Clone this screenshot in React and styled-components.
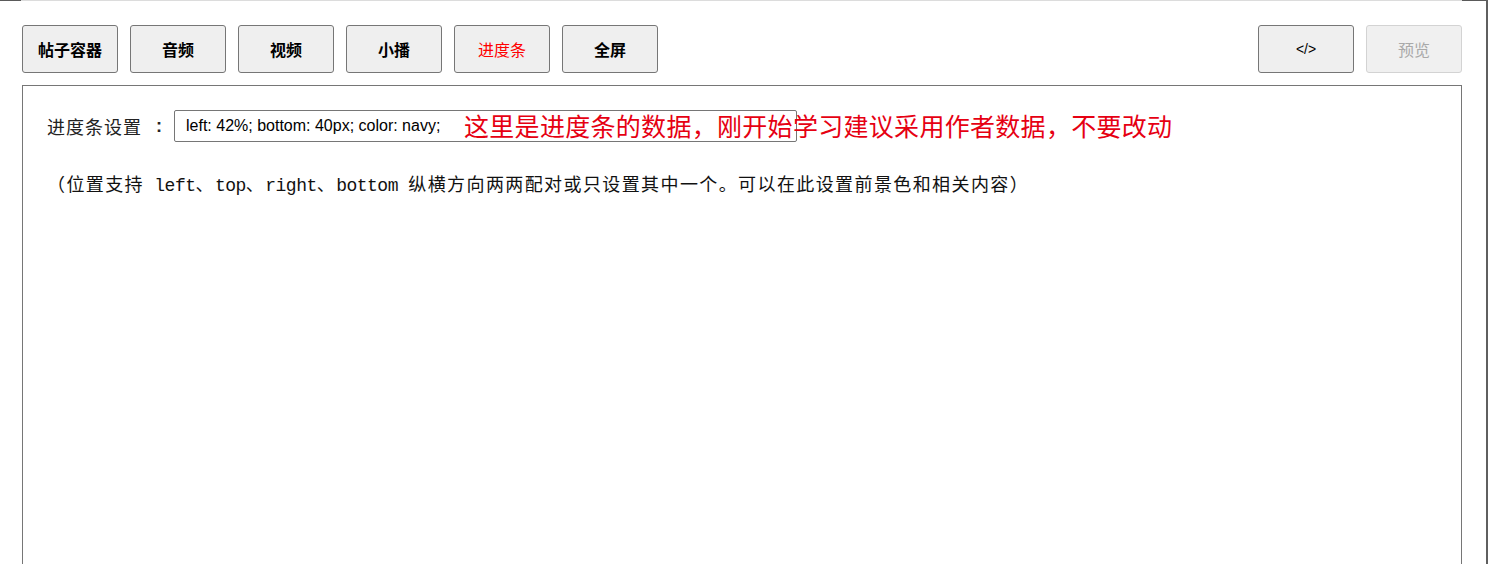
import React from "react";
import styled, { createGlobalStyle } from "styled-components";

const GlobalStyle = createGlobalStyle`
  html, body {
    margin: 0;
    padding: 0;
    background: #fff;
    overflow: hidden;
  }
  body {
    font-family: "Noto Sans CJK SC", "Liberation Sans", sans-serif;
    color: #000;
  }
`;

const Frame = styled.div`
  position: relative;
  height: 564px;
  border-right: 2px solid #5f5f5f;
  box-sizing: border-box;
  overflow: hidden;
`;

const TopRule = styled.div`
  display: flex;
  height: 1px;
`;

const RuleSeg = styled.div`
  height: 1px;
  width: ${(p) => (p.w ? `${p.w}px` : "auto")};
  flex: ${(p) => (p.w ? "none" : "1")};
  background: ${(p) => (p.dark ? "#5a5a5a" : "#dcdcdc")};
`;

const Page = styled.div`
  padding: 24px 24px 0 22px;
`;

const Toolbar = styled.div`
  display: flex;
  align-items: center;
  gap: 12px;
`;

const Spacer = styled.div`
  flex: 1;
`;

const ToolButton = styled.button`
  width: 96px;
  height: 48px;
  box-sizing: border-box;
  border: 1px solid ${(p) => (p.disabled ? "#d3d3d3" : "#767676")};
  border-radius: 3px;
  background: ${(p) => (p.disabled ? "#f0f0f0" : "#efefef")};
  color: ${(p) => (p.disabled ? "#a9a9a9" : p.active ? "#ff0000" : "#000")};
  font-family: ${(p) =>
    p.code ? `"Liberation Sans", Arial, sans-serif` : `"Noto Sans CJK SC", sans-serif`};
  font-size: ${(p) => (p.code ? "14px" : "16px")};
  font-weight: ${(p) => (p.disabled || p.active || p.code ? 400 : 700)};
  padding: 0;
  cursor: ${(p) => (p.disabled ? "default" : "pointer")};
`;

const Panel = styled.div`
  margin-top: 12px;
  border: 1px solid #767676;
  min-height: 520px;
  padding: 24px 24px;
  box-sizing: border-box;
`;

const SettingRow = styled.div`
  position: relative;
  display: flex;
  align-items: center;
`;

const Label = styled.span`
  display: flex;
  align-items: center;
  font-family: "Noto Sans CJK SC", serif;
  font-size: 18px;
  letter-spacing: 1px;
  width: 127px;
  color: #222;
`;

const Colon = styled.span`
  margin-left: 14px;
  font-family: "Liberation Sans", Arial, sans-serif;
  font-weight: 700;
  font-size: 18px;
`;

const StyleInput = styled.input`
  width: 623px;
  height: 32px;
  box-sizing: border-box;
  border: 1px solid #767676;
  border-radius: 2px;
  padding: 0 11px;
  font-family: "Liberation Sans", Arial, sans-serif;
  font-size: 16px;
  color: #000;
  outline: none;
`;

const Note = styled.span`
  position: absolute;
  left: 417px;
  top: 50%;
  transform: translateY(-52%);
  font-family: "Noto Sans CJK SC", sans-serif;
  font-size: 25px;
  letter-spacing: 0.3px;
  color: #e60012;
  white-space: nowrap;
  pointer-events: none;
`;

const Hint = styled.p`
  margin: 28px 0 0 0;
  font-family: "Noto Sans CJK SC", serif;
  font-size: 18px;
  letter-spacing: 1.4px;
  line-height: 27px;
  color: #111;
  white-space: pre;
`;

const Code = styled.span`
  font-family: "Liberation Mono", "DejaVu Sans Mono", monospace;
  letter-spacing: -0.5px;
`;

const tabs = ["帖子容器", "音频", "视频", "小播", "进度条", "全屏"];

const App = () => {
  return (
    <Frame>
      <GlobalStyle />
      <TopRule>
        <RuleSeg dark w={21} />
        <RuleSeg />
        <RuleSeg dark w={24} />
      </TopRule>
      <Page>
        <Toolbar>
          {tabs.map((t) => (
            <ToolButton key={t} active={t === "进度条"}>
              {t}
            </ToolButton>
          ))}
          <Spacer />
          <ToolButton code>&lt;/&gt;</ToolButton>
          <ToolButton disabled>预览</ToolButton>
        </Toolbar>
        <Panel>
          <SettingRow>
            <Label>
              进度条设置<Colon>:</Colon>
            </Label>
            <StyleInput defaultValue="left: 42%; bottom: 40px; color: navy;" />
            <Note>这里是进度条的数据，刚开始学习建议采用作者数据，不要改动</Note>
          </SettingRow>
          <Hint>
            （位置支持<Code> left</Code>、<Code>top</Code>、<Code>right</Code>、
            <Code>bottom </Code>纵横方向两两配对或只设置其中一个。可以在此设置前景色和相关内容）
          </Hint>
        </Panel>
      </Page>
    </Frame>
  );
};

export default App;
